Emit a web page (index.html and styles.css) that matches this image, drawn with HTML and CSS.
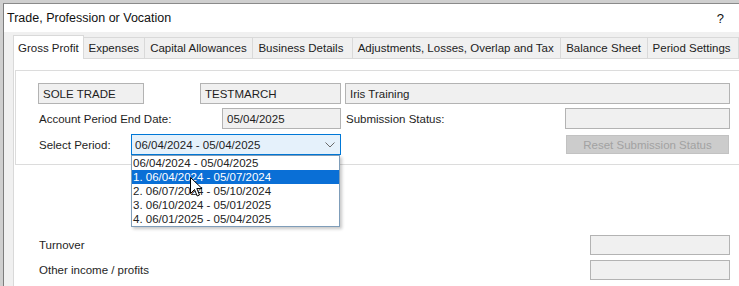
FILE: index.html
```html
<!DOCTYPE html>
<html>
<head>
<meta charset="utf-8">
<link rel="stylesheet" href="styles.css">
</head>
<body>
<div class="desk">
  <div class="window">
    <div class="titlebar">
      <span class="title">Trade, Profession or Vocation</span>
      <span class="help">?</span>
    </div>
    <div class="body">
      <div class="tabs">
        <div class="tab active w-gross">Gross Profit</div>
        <div class="tab w-exp">Expenses</div>
        <div class="tab w-cap">Capital Allowances</div>
        <div class="tab w-bus">Business Details</div>
        <div class="tab w-adj">Adjustments, Losses, Overlap and Tax</div>
        <div class="tab w-bal">Balance Sheet</div>
        <div class="tab w-per">Period Settings</div>
      </div>
      <div class="panel">
        <div class="group">
          <div class="row">
            <div class="box w-sole">SOLE TRADE</div>
            <div class="box w-test">TESTMARCH</div>
            <div class="box w-iris">Iris Training</div>
          </div>
          <div class="row r2">
            <div class="label w-lab1">Account Period End Date:</div>
            <div class="box w-date">05/04/2025</div>
            <div class="label w-lab2">Submission Status:</div>
            <div class="box w-stat"></div>
          </div>
          <div class="row r3">
            <div class="label w-lab3">Select Period:</div>
            <div class="combo">
              <span>06/04/2024 - 05/04/2025</span>
              <svg class="chev" width="10" height="6" viewBox="0 0 10 6"><polyline points="0.5,0.5 5,5 9.5,0.5" fill="none" stroke="#6a6a6a" stroke-width="1"/></svg>
              <div class="list">
                <div class="item">06/04/2024 - 05/04/2025</div>
                <div class="item sel">1. 06/04/2024 - 05/07/2024</div>
                <div class="item">2. 06/07/2024 - 05/10/2024</div>
                <div class="item">3. 06/10/2024 - 05/01/2025</div>
                <div class="item">4. 06/01/2025 - 05/04/2025</div>
                <svg class="cursor" width="13" height="21" viewBox="0 0 13 21"><path d="M0.5,0.5 L0.5,16.5 L4.5,12.5 L7.2,19 L9.5,18 L6.8,11.5 L12,11.5 Z" fill="#fff" stroke="#000" stroke-width="1" stroke-linejoin="round"/></svg>
              </div>
            </div>
            <div class="btn">Reset Submission Status</div>
          </div>
        </div>
        <div class="lower">
          <div class="lrow">
            <div class="label w-low">Turnover</div>
            <div class="box w-num"></div>
          </div>
          <div class="lrow">
            <div class="label w-low">Other income / profits</div>
            <div class="box w-num"></div>
          </div>
        </div>
      </div>
    </div>
  </div>
</div>
</body>
</html>
```
FILE: styles.css
```css
html, body {
  margin: 0;
  padding: 0;
}
body {
  width: 739px;
  height: 286px;
  overflow: hidden;
  background: #cfcfcf;
  font-family: "Liberation Sans", Arial, sans-serif;
  font-size: 11.5px;
  color: #1e1e1e;
}
.desk {
  padding: 3px 0 0 3px;
  height: 286px;
  box-sizing: border-box;
}
.window {
  height: 283px;
  background: #f0f0f0;
  border-left: 1px solid #7d7d7d;
  border-top: 1px solid #8a8a8a;
  box-sizing: border-box;
  overflow: hidden;
}
.titlebar {
  height: 28px;
  background: #fff;
  display: flex;
  align-items: center;
  justify-content: space-between;
  padding: 0 15px 0 3px;
  font-size: 12.5px;
  color: #111;
}
.help {
  font-size: 13px;
}
.body {
  padding: 3px 0 0 9px;
}
.tabs {
  display: flex;
  height: 23px;
  align-items: flex-start;
  position: relative;
  z-index: 2;
}
.tab {
  height: 21px;
  margin-top: 2px;
  box-sizing: border-box;
  border: 1px solid #d9d9d9;
  border-bottom: none;
  border-left: none;
  padding-left: 5px;
  display: flex;
  align-items: center;
  white-space: nowrap;
  background: #f0f0f0;
  color: #222;
}
.tab.active {
  height: 24px;
  margin-top: 0;
  background: #fff;
  border-left: 1px solid #d9d9d9;
  padding-left: 4px;
}
.w-gross { width: 71px; }
.w-exp { width: 62px; }
.w-cap { width: 109px; }
.w-bus { width: 100px; }
.w-adj { width: 210px; }
.w-bal { width: 87px; }
.w-per { width: 92px; }

.panel {
  background: #fff;
  border-top: 1px solid #d9d9d9;
  border-left: 1px solid #d9d9d9;
  height: 240px;
  position: relative;
  z-index: 1;
}
.group {
  margin: 11px 0 0 1px;
  width: 760px;
  border: 1px solid #dcdcdc;
  border-right: none;
  padding: 12px 0 9px 22px;
}
.row {
  display: flex;
  height: 21px;
  align-items: center;
}
.r2 { margin-top: 4px; }
.r3 { margin-top: 5px; }
.box {
  height: 21px;
  box-sizing: border-box;
  border: 1px solid #b3b3b3;
  background: #f0f0f0;
  padding-left: 4px;
  display: flex;
  align-items: center;
  white-space: nowrap;
  flex: none;
}
.label {
  flex: none;
  padding-left: 1px;
  box-sizing: border-box;
  white-space: nowrap;
}
.w-sole { width: 106px; }
.w-test { width: 141px; margin-left: 56px; }
.w-iris { width: 385px; margin-left: 4px; }
.w-lab1 { width: 184px; }
.w-date { width: 119px; }
.w-lab2 { width: 219px; margin-left: 5px; padding-left: 0; }
.w-stat { width: 165px; }
.w-lab3 { width: 93px; }

.combo {
  position: relative;
  width: 210px;
  height: 21px;
  box-sizing: border-box;
  border: 1px solid #0078d7;
  background: #e5f1fb;
  display: flex;
  align-items: center;
  justify-content: space-between;
  padding: 0 5px 0 3px;
  flex: none;
}
.chev {
  display: block;
}
.list {
  position: absolute;
  left: -1px;
  top: 20px;
  width: 209px;
  box-sizing: border-box;
  border: 1px solid #7f9db9;
  background: #fff;
  padding: 0;
  box-shadow: 2px 2px 3px rgba(0, 0, 0, 0.22);
  z-index: 5;
}
.item {
  height: 14px;
  line-height: 14px;
  padding-left: 1px;
  white-space: nowrap;
  color: #222;
}
.item.sel {
  background: #0a6fd6;
  color: #fff;
}
.cursor {
  position: absolute;
  left: 58px;
  top: 21px;
}
.btn {
  flex: none;
  width: 163px;
  height: 19px;
  margin-left: 225px;
  box-sizing: border-box;
  border: 1px solid #c2c2c2;
  background: #cccccc;
  color: #a2a2a2;
  display: flex;
  align-items: center;
  justify-content: center;
}
.lower {
  margin-top: 70px;
  padding-left: 24px;
}
.lrow {
  display: flex;
  align-items: center;
  height: 20px;
  margin-bottom: 5px;
}
.w-low { width: 552px; }
.w-num { width: 140px; height: 20px; }
```
